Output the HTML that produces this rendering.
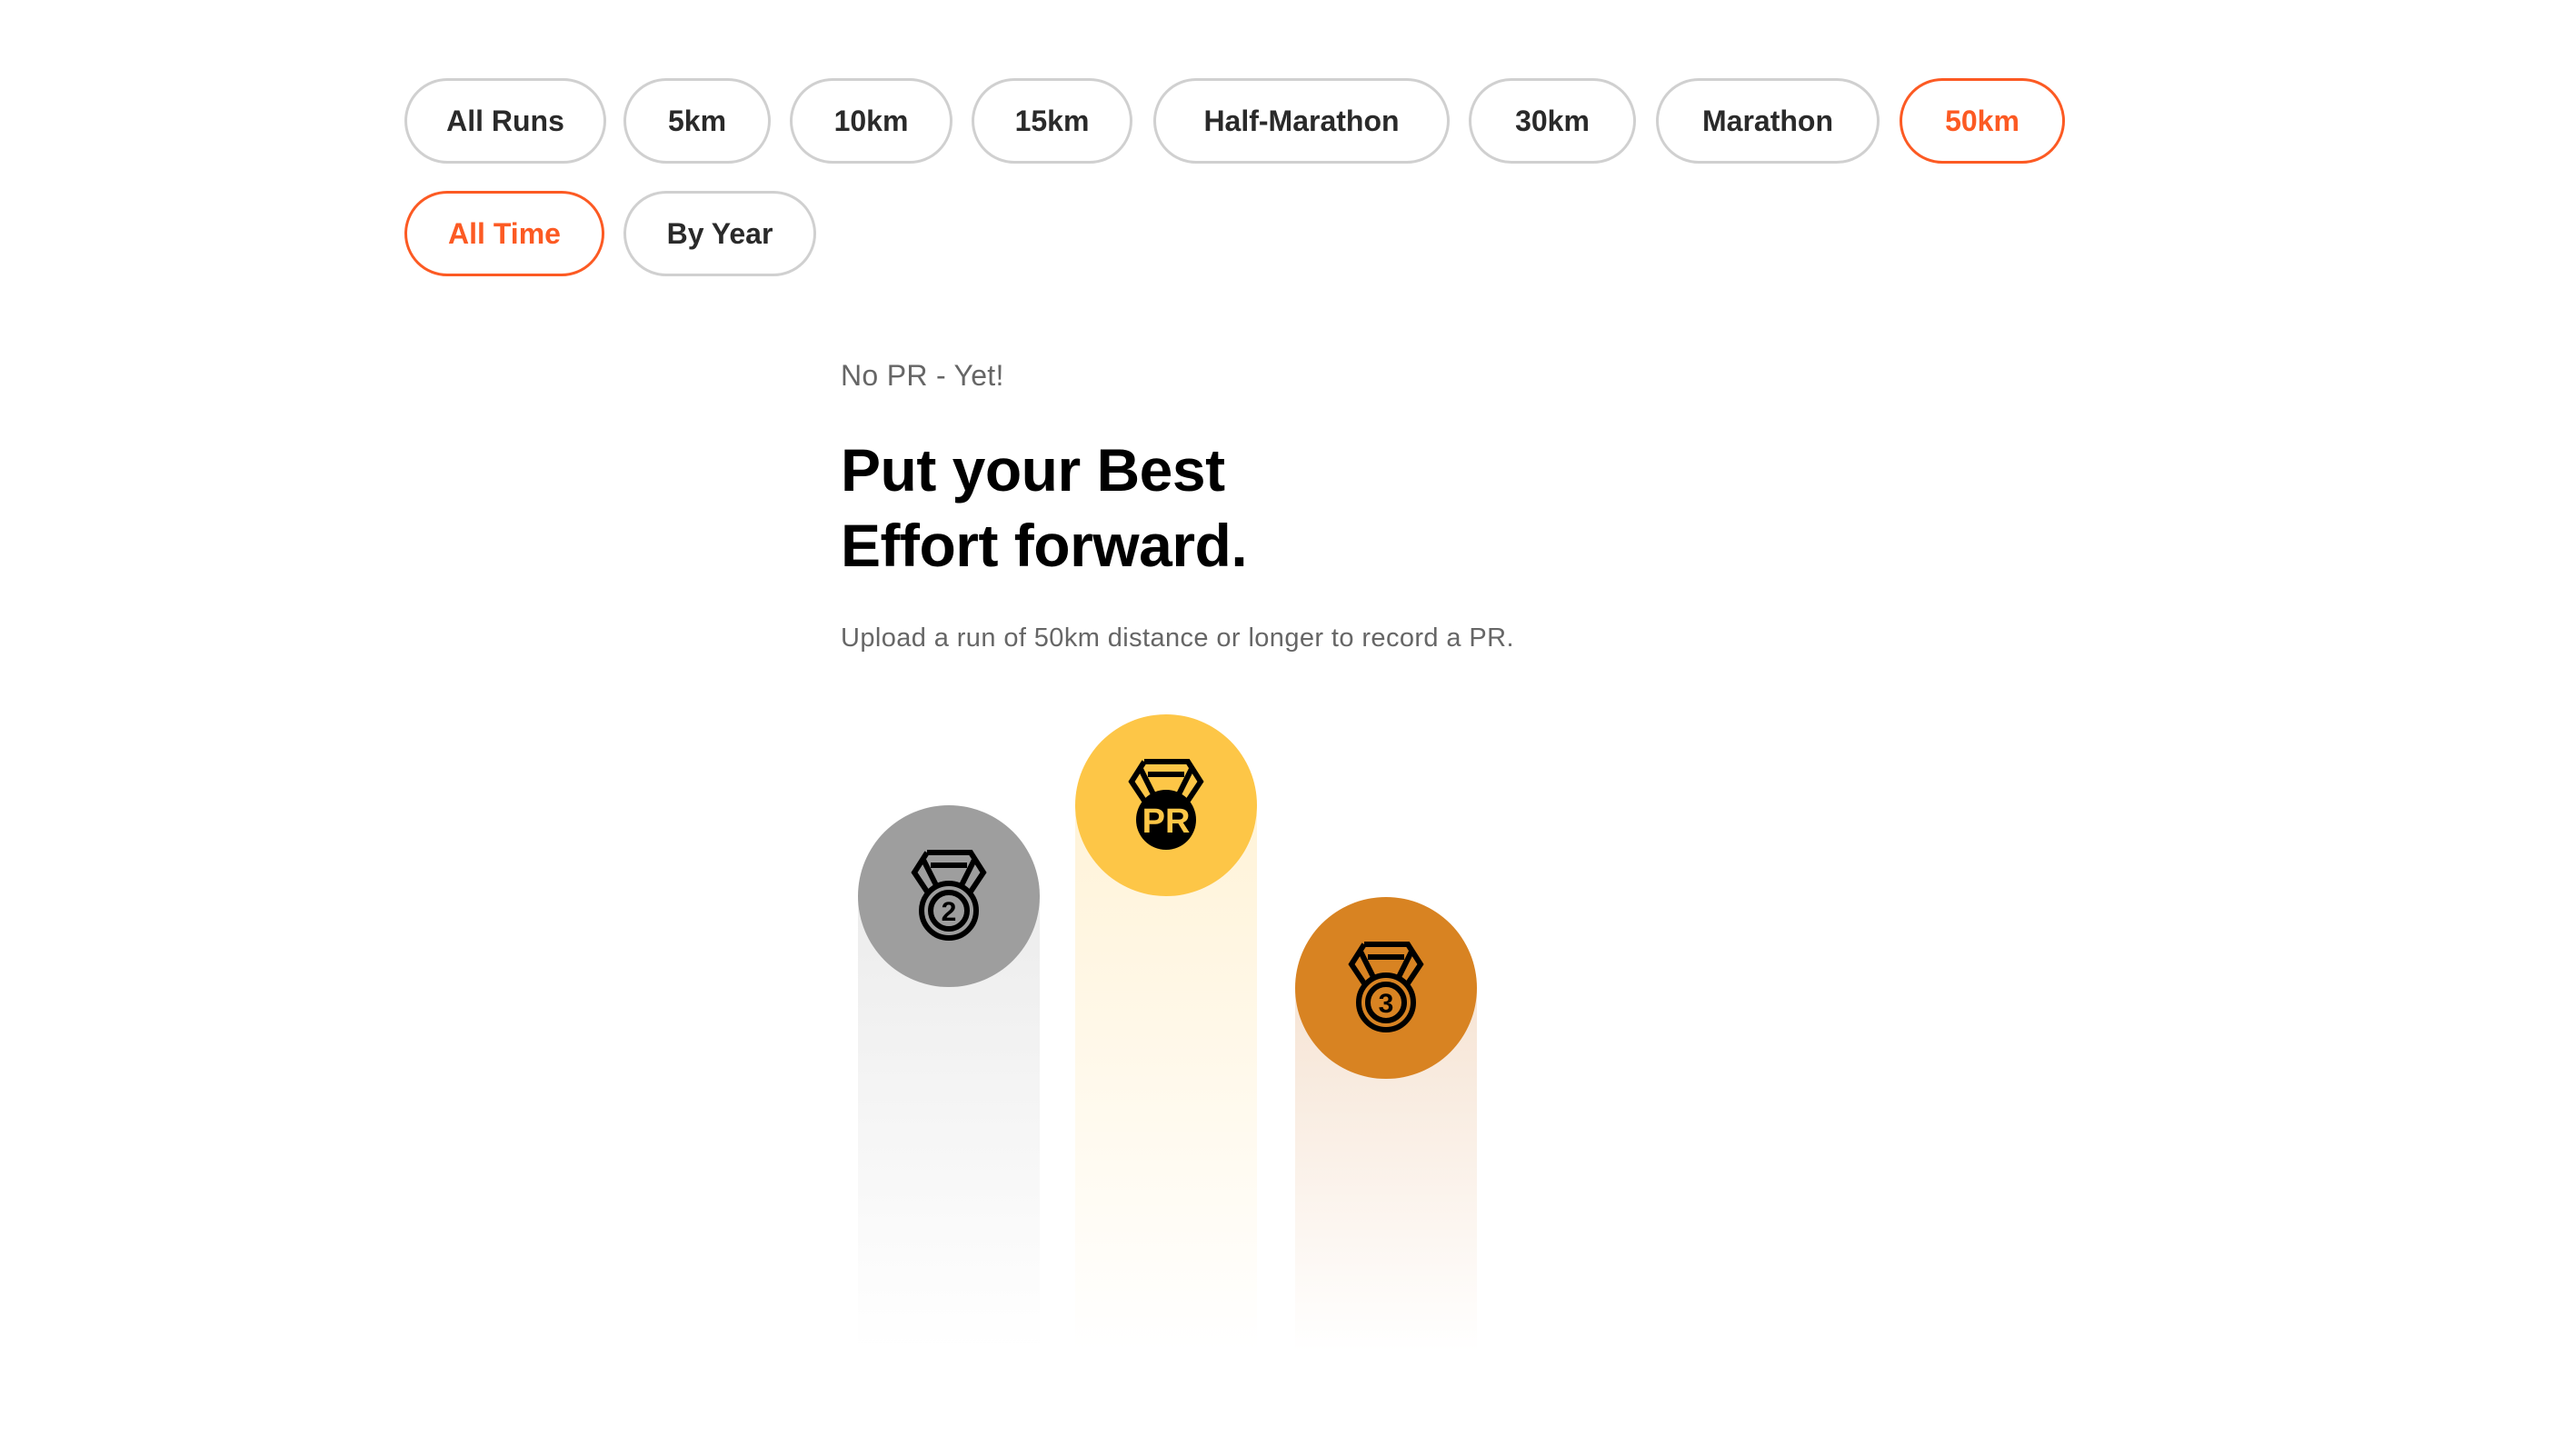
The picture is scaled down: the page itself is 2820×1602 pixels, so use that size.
<!DOCTYPE html>
<html><head><style>
*{margin:0;padding:0;box-sizing:border-box}
body{width:2820px;height:1602px;background:#fff;font-family:"Liberation Sans",sans-serif;position:relative;overflow:hidden}
.p{position:absolute;height:94px;border:3px solid #d0d0d0;border-radius:47px;display:flex;align-items:center;justify-content:center;font-weight:bold;font-size:32px;color:#2a2a2a}
.p.a{border-color:#fc5a23;color:#fc5a23}
.t{position:absolute;left:925px}
.col{position:absolute;width:200px}
.c{position:absolute;width:200px;height:200px;border-radius:50%}
</style></head><body>
<div class="p" style="left:445px;top:86px;width:222px">All Runs</div>
<div class="p" style="left:686px;top:86px;width:162px">5km</div>
<div class="p" style="left:869px;top:86px;width:179px">10km</div>
<div class="p" style="left:1069px;top:86px;width:177px">15km</div>
<div class="p" style="left:1269px;top:86px;width:326px">Half-Marathon</div>
<div class="p" style="left:1616px;top:86px;width:184px">30km</div>
<div class="p" style="left:1822px;top:86px;width:246px">Marathon</div>
<div class="p a" style="left:2090px;top:86px;width:182px">50km</div>
<div class="p a" style="left:445px;top:210px;width:220px">All Time</div>
<div class="p" style="left:686px;top:210px;width:212px">By Year</div>

<div class="t" style="top:395px;font-size:32px;color:#666;letter-spacing:0.3px">No PR - Yet!</div>
<div class="t" style="top:476px;font-size:66px;font-weight:bold;line-height:83px;color:#000;letter-spacing:-0.5px">Put your Best<br>Effort forward.</div>
<div class="t" style="top:686px;font-size:29px;color:#666;letter-spacing:0.4px">Upload a run of 50km distance or longer to record a PR.</div>

<div class="col" style="left:944px;top:986px;height:500px;background:linear-gradient(#ececec,#fff)"></div>
<div class="col" style="left:1183px;top:886px;height:600px;background:linear-gradient(#fff3d8,#fff)"></div>
<div class="col" style="left:1425px;top:1087px;height:400px;background:linear-gradient(#f6e4d4,#fff)"></div>

<div class="c" style="left:944px;top:886px;background:#9e9e9e"></div>
<div class="c" style="left:1183px;top:786px;background:#fdc647"></div>
<div class="c" style="left:1425px;top:987px;background:#d88322"></div>

<svg style="position:absolute;left:0;top:0" width="2820" height="1602">
<defs>
<g id="rib" fill="none" stroke="#000" stroke-width="6" stroke-linejoin="miter">
<path d="M-24,-48 L24,-48 L38,-26 L22,-2 M-24,-48 L-38,-26 L-22,-2 M-28,-40 L-13,-10 M28,-40 L13,-10 M-20,-34 L20,-34"/>
</g>
</defs>
<g transform="translate(1044,986)"><use href="#rib"/><g fill="none" stroke="#000" stroke-width="6"><circle cx="0" cy="16" r="30"/><circle cx="0" cy="16" r="20"/></g></g>
<g transform="translate(1525,1087)"><use href="#rib"/><g fill="none" stroke="#000" stroke-width="6"><circle cx="0" cy="16" r="30"/><circle cx="0" cy="16" r="20"/></g></g>
<g transform="translate(1283,886)"><use href="#rib"/></g>
<circle cx="1283" cy="902" r="33" fill="#000"/>
<text x="1283" y="916" font-family="Liberation Sans" font-weight="bold" font-size="38" fill="#fdc647" text-anchor="middle">PR</text>
<text x="1044" y="1013" font-family="Liberation Sans" font-weight="bold" font-size="30" fill="#000" text-anchor="middle">2</text>
<text x="1525" y="1114" font-family="Liberation Sans" font-weight="bold" font-size="30" fill="#000" text-anchor="middle">3</text>
</svg>
</body></html>
